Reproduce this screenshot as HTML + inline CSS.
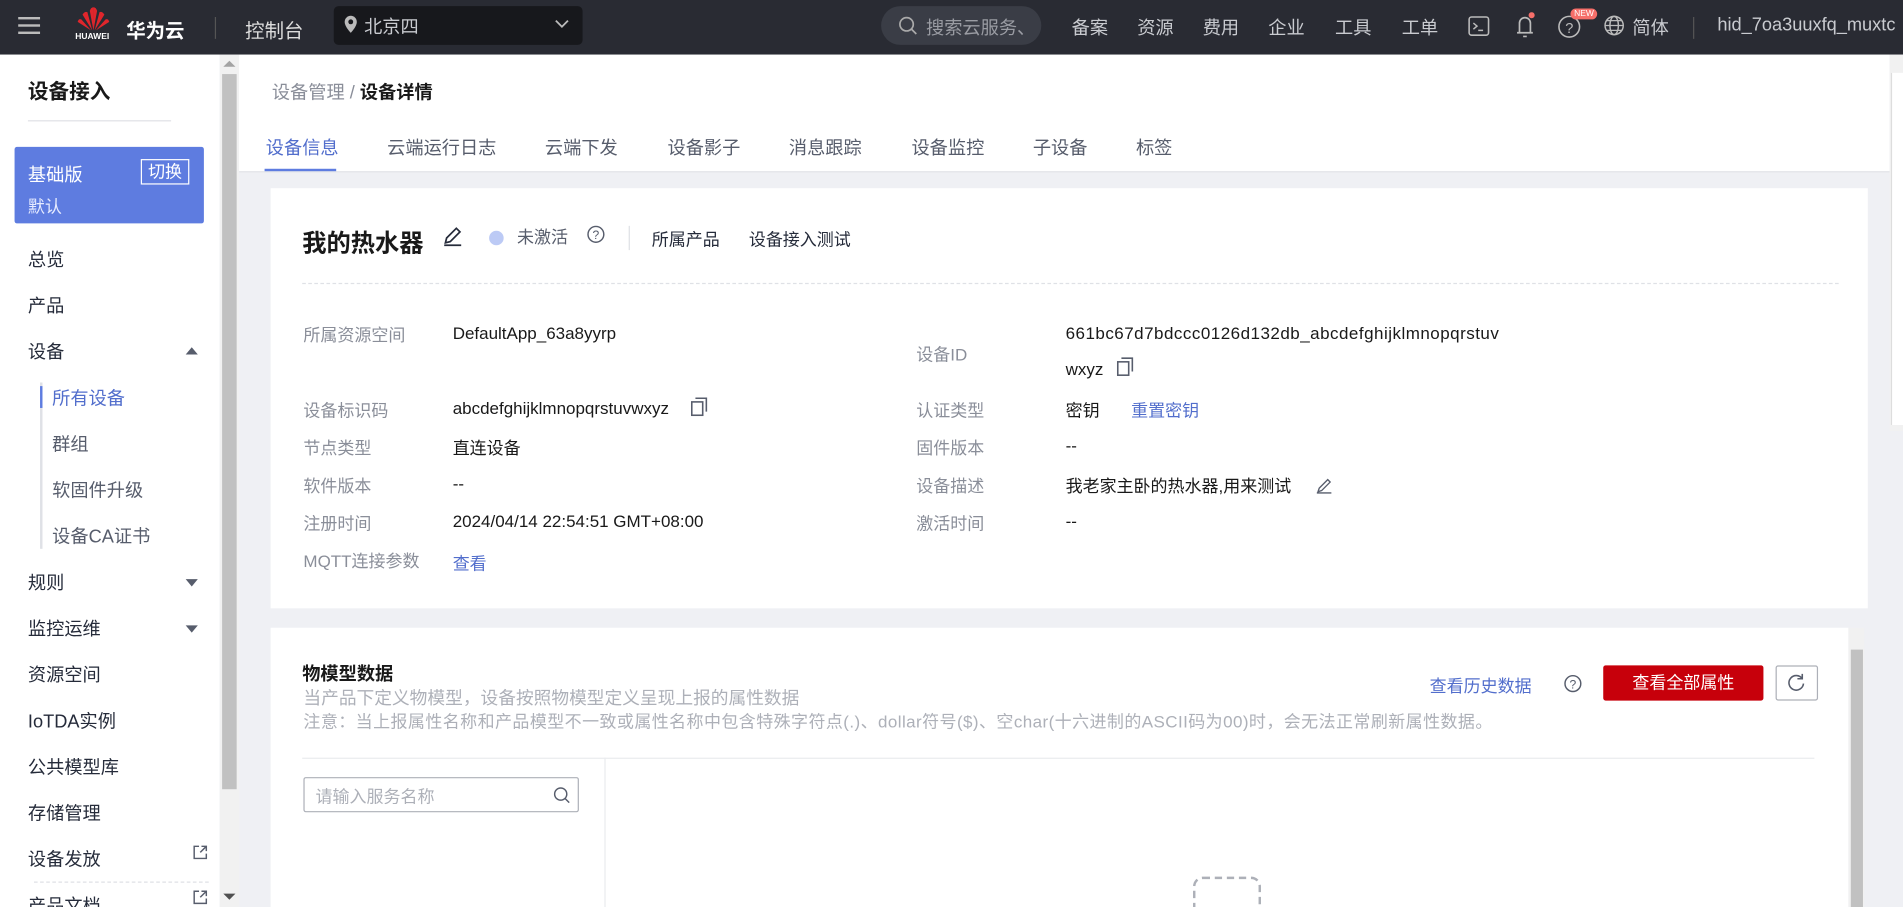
<!DOCTYPE html>
<html><head><meta charset="utf-8"><style>
html,body{margin:0;padding:0;overflow:hidden;width:1903px;height:907px;background:#eff0f4}
#w{position:absolute;left:0;top:0;width:1568px;height:747px;transform:scale(1.21365,1.2142);transform-origin:0 0;font-family:"Liberation Sans","Noto Sans CJK SC",sans-serif;font-size:14px;color:#191919;background:#eff0f4;overflow:hidden}
.a{position:absolute;white-space:nowrap}
.hd{position:absolute;left:0;top:0;width:1568px;height:45px;background:#292b33;color:#c9cbd0}
.lb{color:#8a8e99}
.blue{color:#526ecc}
.sb{color:#252b3a;font-size:15px}
</style></head><body><div id="w">
<div class="hd">
 <div class="a" style="left:15px;top:14px;width:18px;height:2px;background:#bbb;box-shadow:0 6px 0 #bbb,0 12px 0 #bbb"></div>
 <svg class="a" style="left:62px;top:5px" width="30" height="22" viewBox="0 0 30 22"><g fill="#e0262c"><path d="M15 20 L12 4 Q13 1 15 1Z"/><path d="M15 20 L18 4 Q17 1 15 1Z"/><path d="M14 20 L6 7 Q8 4 10 5Z"/><path d="M16 20 L24 7 Q22 4 20 5Z"/><path d="M13 20 L2 13 Q3 10 5 11Z"/><path d="M17 20 L28 13 Q27 10 25 11Z"/></g></svg>
 <div class="a" style="left:62px;top:27px;font-size:7px;color:#fff;font-weight:bold">HUAWEI</div>
 <div class="a" style="left:104px;top:12px;font-size:16px;color:#fff;font-weight:bold">华为云</div>
 <div class="a" style="left:177px;top:14px;width:1px;height:18px;background:#555"></div>
 <div class="a" style="left:202px;top:12px;font-size:16px;color:#ddd">控制台</div>
 <div class="a" style="left:275px;top:5px;width:205px;height:32px;background:#17181c;border-radius:4px"></div>
 <svg class="a" style="left:283px;top:12px" width="12" height="16" viewBox="0 0 12 16"><path d="M6 1a5 5 0 0 0-5 5c0 4 5 9 5 9s5-5 5-9a5 5 0 0 0-5-5z" fill="#bbb"/><circle cx="6" cy="6" r="2" fill="#17181c"/></svg>
 <div class="a" style="left:300px;top:11px;font-size:15px">北京四</div>
 <svg class="a" style="left:457px;top:16px" width="12" height="8"><path d="M1 1l5 5 5-5" stroke="#bbb" fill="none" stroke-width="1.5"/></svg>
 <div class="a" style="left:726px;top:5px;width:132px;height:32px;background:#3a3d46;border-radius:16px"></div>
 <svg class="a" style="left:740px;top:13px" width="16" height="16"><circle cx="7" cy="7" r="5.5" stroke="#aaa" fill="none" stroke-width="1.4"/><path d="M11 11l4 4" stroke="#aaa" stroke-width="1.4"/></svg>
 <div class="a" style="left:763px;top:12px;font-size:15px;color:#9a9ca3">搜索云服务、</div>
 <div class="a" style="left:883px;top:12px;font-size:15px">备案</div>
 <div class="a" style="left:937px;top:12px;font-size:15px">资源</div>
 <div class="a" style="left:991px;top:12px;font-size:15px">费用</div>
 <div class="a" style="left:1045px;top:12px;font-size:15px">企业</div>
 <div class="a" style="left:1100px;top:12px;font-size:15px">工具</div>
 <div class="a" style="left:1155px;top:12px;font-size:15px">工单</div>
 <svg class="a" style="left:1209px;top:12px" width="20" height="20"><rect x="1.5" y="2" width="16" height="15" rx="2" stroke="#bbb" fill="none" stroke-width="1.3"/><path d="M5 7l3 2.5L5 12M9 13h4" stroke="#bbb" fill="none" stroke-width="1.2"/></svg>
 <svg class="a" style="left:1246px;top:10px" width="22" height="24"><path d="M4 17h13M6 17V9a4.5 4.5 0 0 1 9 0v8M9 20h3" stroke="#bbb" fill="none" stroke-width="1.4"/><circle cx="16" cy="2.5" r="2.5" fill="#f66f6a"/></svg>
 <svg class="a" style="left:1283px;top:12px" width="22" height="22"><circle cx="10" cy="10" r="8.5" stroke="#bbb" fill="none" stroke-width="1.3"/><text x="10" y="15" font-size="12" fill="#bbb" text-anchor="middle" font-family="Liberation Sans">?</text></svg>
 <div class="a" style="left:1294px;top:7px;background:#f66f6a;color:#fff;font-size:7px;padding:1px 3px;border-radius:6px">NEW</div>
 <svg class="a" style="left:1321px;top:12px" width="18" height="18"><circle cx="9" cy="9" r="7.5" stroke="#bbb" fill="none" stroke-width="1.2"/><ellipse cx="9" cy="9" rx="3.5" ry="7.5" stroke="#bbb" fill="none" stroke-width="1.2"/><path d="M1.5 9h15M3 5h12M3 13h12" stroke="#bbb" stroke-width="1"/></svg>
 <div class="a" style="left:1345px;top:12px;font-size:15px">简体</div>
 <div class="a" style="left:1395px;top:14px;width:1px;height:18px;background:#555"></div>
 <div class="a" style="left:1415px;top:12px;font-size:15px">hid_7oa3uuxfq_muxtc</div>
</div>

<div class="a" style="left:0;top:45px;width:181px;height:702px;background:#fff"></div>
<div class="a" style="left:181px;top:45px;width:16px;height:702px;background:#f1f1f1"></div>
<div class="a" style="left:183px;top:61px;width:12px;height:589px;background:#c1c1c1"></div>
<div class="a" style="left:184px;top:50px;width:0;height:0;border:5px solid transparent;border-bottom-color:#a3a3a3;border-top:0"></div>
<div class="a" style="left:184px;top:736px;width:0;height:0;border:5px solid transparent;border-top-color:#505050;border-bottom:0"></div>
<div class="a" style="left:23px;top:61px;font-size:17px;font-weight:bold;color:#191919">设备接入</div>
<div class="a" style="left:23px;top:99px;width:118px;height:1px;background:#dfe1e6"></div>
<div class="a" style="left:12px;top:121px;width:156px;height:63px;background:#5e7ce0;border-radius:2px"></div>
<div class="a" style="left:23px;top:133px;font-size:15px;color:#fff">基础版</div>
<div class="a" style="left:116px;top:131px;font-size:14px;color:#fff;border:1px solid #fff;padding:0 5px;line-height:19px">切换</div>
<div class="a" style="left:23px;top:160px;font-size:14px;color:#e6ebff">默认</div>
<div class="a sb" style="left:23px;top:203px">总览</div>
<div class="a sb" style="left:23px;top:241px">产品</div>
<div class="a sb" style="left:23px;top:279px">设备</div>
<div class="a" style="left:153px;top:286px;border:5px solid transparent;border-bottom:6px solid #575d6c;border-top:0"></div>
<div class="a" style="left:33px;top:315px;width:2px;height:137px;background:#dfe1e6"></div>
<div class="a" style="left:33px;top:318px;width:2px;height:18px;background:#5e7ce0"></div>
<div class="a" style="left:43px;top:317px;font-size:15px;color:#526ecc">所有设备</div>
<div class="a sb" style="left:43px;top:355px;color:#575d6c">群组</div>
<div class="a sb" style="left:43px;top:393px;color:#575d6c">软固件升级</div>
<div class="a sb" style="left:43px;top:431px;color:#575d6c">设备CA证书</div>
<div class="a sb" style="left:23px;top:469px">规则</div>
<div class="a" style="left:153px;top:477px;border:5px solid transparent;border-top:6px solid #575d6c;border-bottom:0"></div>
<div class="a sb" style="left:23px;top:507px">监控运维</div>
<div class="a" style="left:153px;top:515px;border:5px solid transparent;border-top:6px solid #575d6c;border-bottom:0"></div>
<div class="a sb" style="left:23px;top:545px">资源空间</div>
<div class="a sb" style="left:23px;top:583px">IoTDA实例</div>
<div class="a sb" style="left:23px;top:621px">公共模型库</div>
<div class="a sb" style="left:23px;top:659px">存储管理</div>
<div class="a sb" style="left:23px;top:697px">设备发放</div>
<svg class="a" style="left:158px;top:695px" width="14" height="14"><path d="M6 2H2v10h10V8M8 2h4v4M12 2L7 7" stroke="#575d6c" fill="none" stroke-width="1.2"/></svg>
<div class="a" style="left:28px;top:726px;width:144px;border-top:1px dashed #dfe1e6"></div>
<div class="a sb" style="left:23px;top:735px">产品文档</div>
<svg class="a" style="left:158px;top:732px" width="14" height="14"><path d="M6 2H2v10h10V8M8 2h4v4M12 2L7 7" stroke="#575d6c" fill="none" stroke-width="1.2"/></svg>

<div class="a" style="left:197px;top:45px;width:1360px;height:96px;background:#fff;border-bottom:1px solid #dfe1e6"></div>
<div class="a" style="left:224px;top:65px;font-size:15px;color:#8a8e99">设备管理 / <b style="color:#191919">设备详情</b></div>
<div class="a" style="left:219px;top:111px;font-size:15px;color:#526ecc">设备信息</div>
<div class="a" style="left:218px;top:139px;width:59px;height:2px;background:#5e7ce0"></div>
<div class="a" style="left:319px;top:111px;font-size:15px;color:#575d6c">云端运行日志</div>
<div class="a" style="left:449px;top:111px;font-size:15px;color:#575d6c">云端下发</div>
<div class="a" style="left:550px;top:111px;font-size:15px;color:#575d6c">设备影子</div>
<div class="a" style="left:650px;top:111px;font-size:15px;color:#575d6c">消息跟踪</div>
<div class="a" style="left:751px;top:111px;font-size:15px;color:#575d6c">设备监控</div>
<div class="a" style="left:851px;top:111px;font-size:15px;color:#575d6c">子设备</div>
<div class="a" style="left:936px;top:111px;font-size:15px;color:#575d6c">标签</div>
<div class="a" style="left:1557px;top:45px;width:11px;height:310px;background:#f1f1f1"></div>
<div class="a" style="left:1558px;top:60px;width:9px;height:290px;background:#fff;border-left:1px solid #ddd"></div>

<div class="a" style="left:223px;top:155px;width:1316px;height:346px;background:#fff"></div>
<div class="a" style="left:249px;top:184px;font-size:20px;font-weight:bold;color:#191919">我的热水器</div>
<svg class="a" style="left:364px;top:185px" width="18" height="18"><path d="M3 15l1-4 8-8 3 3-8 8zM2 17h14" stroke="#252b3a" fill="none" stroke-width="1.4"/></svg>
<div class="a" style="left:403px;top:190px;width:12px;height:12px;border-radius:50%;background:#bccaf5"></div>
<div class="a" style="left:426px;top:185px;color:#575d6c">未激活</div>
<svg class="a" style="left:483px;top:185px" width="16" height="16"><circle cx="8" cy="8" r="6.5" stroke="#575d6c" fill="none" stroke-width="1.2"/><text x="8" y="12" font-size="10" fill="#575d6c" text-anchor="middle" font-family="Liberation Sans">?</text></svg>
<div class="a" style="left:518px;top:186px;width:1px;height:20px;background:#dfe1e6"></div>
<div class="a" style="left:537px;top:187px;color:#252b3a">所属产品</div>
<div class="a" style="left:617px;top:187px;color:#252b3a">设备接入测试</div>
<div class="a" style="left:249px;top:233px;width:1266px;border-top:1px dashed #dfe1e6"></div>
<div class="a lb" style="left:250px;top:266px">所属资源空间</div><div class="a" style="left:373px;top:266px">DefaultApp_63a8yyrp</div>
<div class="a lb" style="left:250px;top:328px">设备标识码</div><div class="a" style="left:373px;top:328px">abcdefghijklmnopqrstuvwxyz</div>
<svg class="a" style="left:569px;top:326px" width="16" height="18"><rect x="1" y="5" width="9" height="11" stroke="#575d6c" fill="none" stroke-width="1.3"/><path d="M4 2h9v11" stroke="#575d6c" fill="none" stroke-width="1.3"/></svg>
<div class="a lb" style="left:250px;top:359px">节点类型</div><div class="a" style="left:373px;top:359px">直连设备</div>
<div class="a lb" style="left:250px;top:390px">软件版本</div><div class="a" style="left:373px;top:390px">--</div>
<div class="a lb" style="left:250px;top:421px">注册时间</div><div class="a" style="left:373px;top:421px">2024/04/14 22:54:51 GMT+08:00</div>
<div class="a lb" style="left:250px;top:452px">MQTT连接参数</div><div class="a blue" style="left:373px;top:454px">查看</div>
<div class="a lb" style="left:755px;top:282px">设备ID</div>
<div class="a" style="left:878px;top:266px;letter-spacing:0.4px">661bc67d7bdccc0126d132db_abcdefghijklmnopqrstuv</div>
<div class="a" style="left:878px;top:296px">wxyz</div>
<svg class="a" style="left:920px;top:293px" width="16" height="18"><rect x="1" y="5" width="9" height="11" stroke="#575d6c" fill="none" stroke-width="1.3"/><path d="M4 2h9v11" stroke="#575d6c" fill="none" stroke-width="1.3"/></svg>
<div class="a lb" style="left:755px;top:328px">认证类型</div><div class="a" style="left:878px;top:328px">密钥</div><div class="a blue" style="left:932px;top:328px">重置密钥</div>
<div class="a lb" style="left:755px;top:359px">固件版本</div><div class="a" style="left:878px;top:359px">--</div>
<div class="a lb" style="left:755px;top:390px">设备描述</div><div class="a" style="left:878px;top:390px">我老家主卧的热水器,用来测试</div>
<svg class="a" style="left:1084px;top:393px" width="14" height="14"><path d="M2 12l1-3 7-7 2 2-7 7zM1 13h12" stroke="#575d6c" fill="none" stroke-width="1.1"/></svg>
<div class="a lb" style="left:755px;top:421px">激活时间</div><div class="a" style="left:878px;top:421px">--</div>

<div class="a" style="left:223px;top:517px;width:1300px;height:230px;background:#fff"></div>
<div class="a" style="left:1523px;top:517px;width:13px;height:230px;background:#f1f1f1"></div>
<div class="a" style="left:1525px;top:535px;width:10px;height:212px;background:#c1c1c1"></div>
<div class="a" style="left:249px;top:544px;font-size:15px;font-weight:bold">物模型数据</div>
<div class="a" style="left:250px;top:564px;color:#adb0b8;font-size:14.6px">当产品下定义物模型，设备按照物模型定义呈现上报的属性数据</div>
<div class="a" style="left:250px;top:584px;color:#adb0b8;font-size:14px;letter-spacing:0.35px">注意：当上报属性名称和产品模型不一致或属性名称中包含特殊字符点(.)、dollar符号($)、空char(十六进制的ASCII码为00)时，会无法正常刷新属性数据。</div>
<div class="a blue" style="left:1178px;top:555px">查看历史数据</div>
<svg class="a" style="left:1288px;top:555px" width="16" height="16"><circle cx="8" cy="8" r="6.5" stroke="#575d6c" fill="none" stroke-width="1.2"/><text x="8" y="12" font-size="10" fill="#575d6c" text-anchor="middle" font-family="Liberation Sans">?</text></svg>
<div class="a" style="left:1321px;top:548px;width:132px;height:29px;background:#c7000b;border-radius:2px;color:#fff;text-align:center;line-height:29px">查看全部属性</div>
<div class="a" style="left:1463px;top:548px;width:33px;height:27px;border:1px solid #adb0b8;border-radius:2px"></div>
<svg class="a" style="left:1472px;top:554px" width="16" height="16"><path d="M13 5A6 6 0 1 0 14 9M13 1v4h-4" stroke="#575d6c" fill="none" stroke-width="1.3"/></svg>
<div class="a" style="left:249px;top:624px;width:1246px;height:1px;background:#eaebee"></div>
<div class="a" style="left:498px;top:624px;width:1px;height:123px;background:#eaebee"></div>
<div class="a" style="left:250px;top:640px;width:225px;height:27px;border:1px solid #adb0b8;border-radius:2px"></div>
<div class="a" style="left:260px;top:646px;color:#adb0b8">请输入服务名称</div>
<svg class="a" style="left:455px;top:647px" width="16" height="16"><circle cx="7" cy="7" r="5" stroke="#575d6c" fill="none" stroke-width="1.2"/><path d="M10.5 10.5l3.5 3.5" stroke="#575d6c" stroke-width="1.2"/></svg>
<div class="a" style="left:983px;top:722px;width:52px;height:30px;border:2px dashed #adb0b8;border-radius:8px"></div>
</div></body></html>
